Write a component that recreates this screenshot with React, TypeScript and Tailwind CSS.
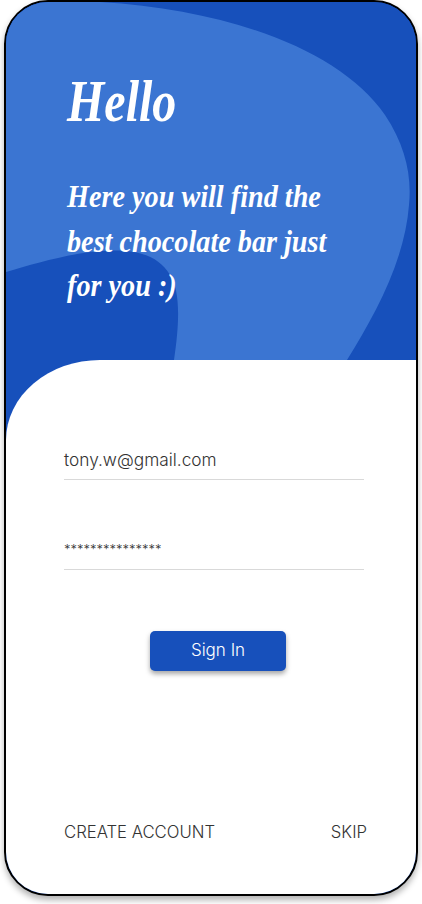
// Sign in screen
const sansFont = "font-['Inter','Open_Sans',sans-serif]";

export default function App() {
  return (
    <div className="w-[422px] h-[904px] bg-white px-1">
      <div className="w-[414px] h-[896px] flex flex-col overflow-hidden rounded-[44px] border-2 border-black bg-[#1750bb] shadow-[0_4px_6px_rgba(0,0,0,0.3)]">
        {/* Header */}
        <div className="relative h-[358px] shrink-0 bg-[#1750bb]">
          <svg className="absolute inset-0 w-full h-full" viewBox="6 2 410 358" preserveAspectRatio="none">
            <path
              d="M6 2 L100 2 C230 10 340 50 385 115 C405 145 412 175 409 205 C405 260 375 315 347 360 L174 360 C180 320 180 290 170 275 C155 250 125 248 90 252 C60 256 30 265 6 272 Z"
              fill="#3b75d2"
            />
          </svg>
          <div className="relative pl-[61px] pt-[64px] text-white italic font-['Liberation_Serif',serif]">
            <h1 className="text-[60px] leading-[70px] font-bold origin-left scale-x-[0.8]">Hello</h1>
            <p className="mt-[39px] w-[300px] text-[31px] leading-[44.5px] font-bold origin-left scale-x-[0.91]">
              Here you will find the best chocolate bar just for you :)
            </p>
          </div>
        </div>

        {/* Form */}
        <div className={`flex-1 flex flex-col bg-white rounded-tl-[94px_80px] pl-[58px] text-[#333333] font-light ${sansFont}`}>
          <div className="mt-[88px] w-[300px] h-[32px] border-b border-[#d9d9d9] text-[17.3px] leading-[24px]">
            tony.w@gmail.com
          </div>
          <div className="mt-[55px] w-[300px] h-[35px] pt-[2px] border-b border-[#d9d9d9] text-[13px] leading-[24px]">
            ***************
          </div>
          <button className="mt-[61px] ml-[86px] w-[136px] h-[40px] rounded-[5px] bg-[#1750bb] text-white text-[17px] font-light shadow-[0_3px_5px_rgba(0,0,0,0.35)]">
            Sign In
          </button>
          <div className="mt-auto mb-[50px] flex justify-between pr-[49px] text-[16.7px] leading-[24px]">
            <span>CREATE ACCOUNT</span>
            <span>SKIP</span>
          </div>
        </div>
      </div>
    </div>
  );
}
